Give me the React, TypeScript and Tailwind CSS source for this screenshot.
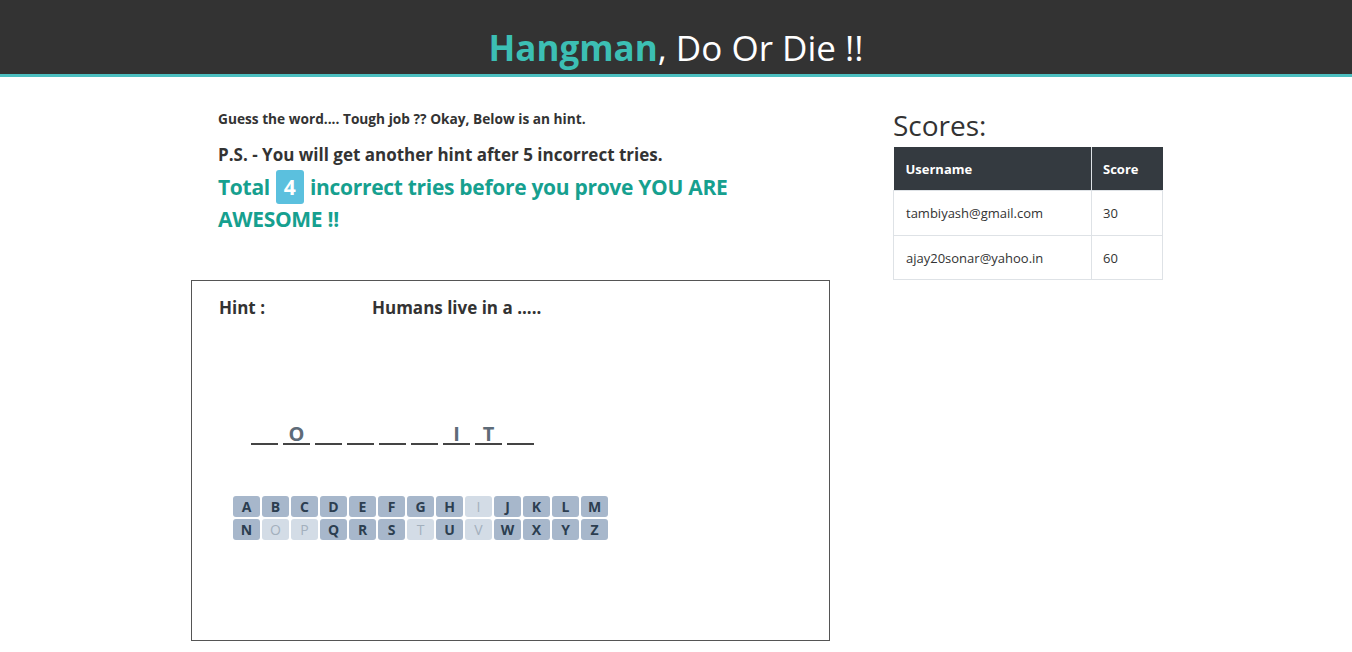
import React from "react";

const word = ["", "O", "", "", "", "", "I", "T", ""];
const row1 = "ABCDEFGHIJKLM".split("");
const row2 = "NOPQRSTUVWXYZ".split("");
const disabled = new Set(["I", "O", "P", "T", "V"]);

function Key({ l }: { l: string }) {
  const off = disabled.has(l);
  return (
    <div
      className={
        off
          ? "w-[27px] h-[21px] rounded-[3px] bg-[#d3dce6] text-[#a3b0bd] font-normal flex items-center justify-center text-[14px]"
          : "w-[27px] h-[21px] rounded-[3px] bg-[#a7b7cb] text-[#2c3e50] font-bold flex items-center justify-center text-[14px]"
      }
    >
      {l}
    </div>
  );
}

export default function App() {
  return (
    <div className="min-h-[652px] bg-white text-[#333] font-['Open_Sans','Noto_Sans',sans-serif]">
      <header className="h-[77px] bg-[#333333] border-b-[3px] border-[#4cbfc0] flex items-end justify-center pb-[4px]">
        <h1 className="text-[35px] leading-[44px] text-white">
          <span className="font-bold text-[#3cbfb4]">Hangman</span>, Do Or Die !!
        </h1>
      </header>
      <div className="flex">
        <div className="ml-[191px] w-[639px]">
          <div className="pl-[27px] pt-[34px]">
            <p className="text-[13.7px] font-bold leading-[16px]">Guess the word.... Tough job ?? Okay, Below is an hint.</p>
            <p className="mt-[16px] text-[17px] font-bold leading-[24px]">P.S. - You will get another hint after 5 incorrect tries.</p>
            <div className="mt-[4px] text-[21px] tracking-[-0.3px] font-bold leading-[32px] text-[#16a08f] w-[600px]">
              <div className="flex items-center h-[32px] gap-[6px] whitespace-nowrap">
                <span>Total</span>
                <span className="bg-[#5bc0de] text-white rounded-[3px] w-[28px] text-center tracking-normal leading-[34px]">4</span>
                <span>incorrect tries before you prove YOU ARE</span>
              </div>
              <div>AWESOME !!</div>
            </div>
          </div>
          <div className="mt-[45px] h-[361px] border border-[#555] flex flex-col">
            <div className="flex pt-[15px] pl-[27px] text-[17px] font-bold leading-[24px]">
              <span className="w-[153px]">Hint :</span>
              <span>Humans live in a .....</span>
            </div>
            <div className="mt-[93px] ml-[59px] flex gap-[5px]">
              {word.map((c, i) => (
                <div
                  key={i}
                  className="w-[27px] h-[32px] pt-[9px] border-b-2 border-[#444] text-[#5e6b78] text-[20px] font-bold leading-[24px] text-center"
                >
                  {c}
                </div>
              ))}
            </div>
            <div className="mt-[51px] ml-[41px] flex flex-col gap-[2px]">
              <div className="flex gap-[2px]">
                {row1.map((l) => (
                  <Key key={l} l={l} />
                ))}
              </div>
              <div className="flex gap-[2px]">
                {row2.map((l) => (
                  <Key key={l} l={l} />
                ))}
              </div>
            </div>
          </div>
        </div>
        <div className="ml-[63px] w-[270px] pt-[30px]">
          <h2 className="text-[28px] leading-[36px] text-[#333]">Scores:</h2>
          <table className="mt-[4px] w-[270px] text-[13px] border-collapse">
            <thead>
              <tr className="bg-[#343a40] text-white h-[43px]">
                <th className="text-left font-bold pl-[12px] pt-[2px] w-[198px] border-r border-[#dee2e6]">Username</th>
                <th className="text-left font-bold pl-[11px] pt-[2px]">Score</th>
              </tr>
            </thead>
            <tbody className="text-[#333]">
              <tr className="h-[45px]">
                <td className="pl-[12px] pt-[3px] border border-[#dee2e6]">tambiyash@gmail.com</td>
                <td className="pl-[11px] pt-[3px] border border-[#dee2e6]">30</td>
              </tr>
              <tr className="h-[44px]">
                <td className="pl-[12px] pt-[3px] border border-[#dee2e6]">ajay20sonar@yahoo.in</td>
                <td className="pl-[11px] pt-[3px] border border-[#dee2e6]">60</td>
              </tr>
            </tbody>
          </table>
        </div>
      </div>
    </div>
  );
}
